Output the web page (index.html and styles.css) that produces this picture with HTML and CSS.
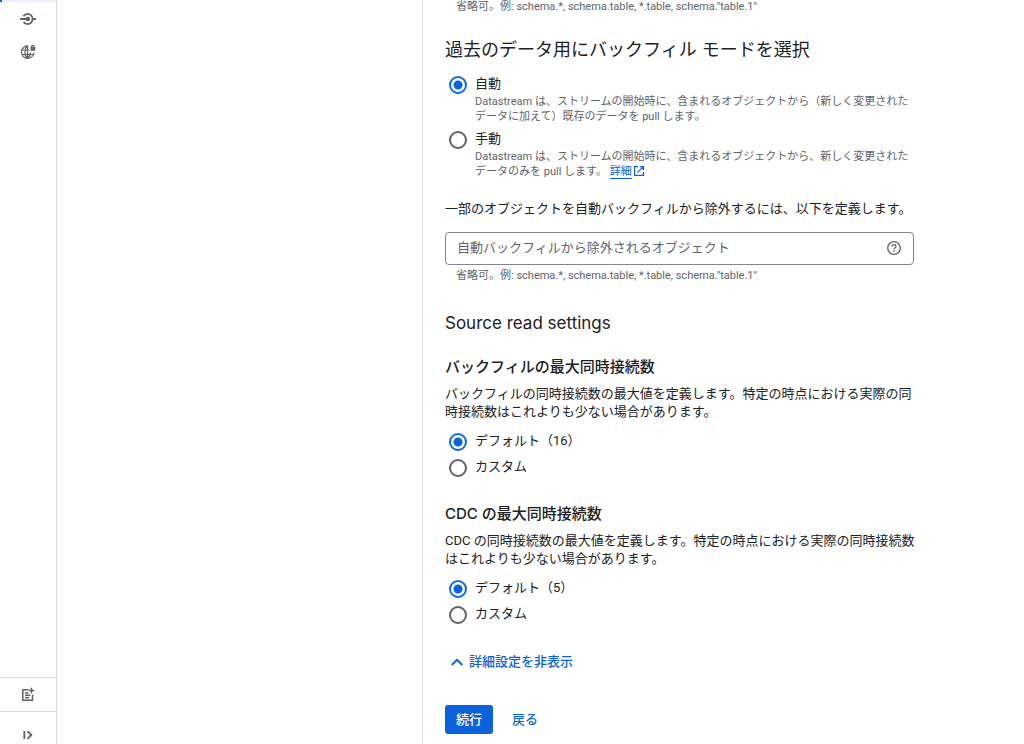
FILE: index.html
```html
<!DOCTYPE html>
<html lang="ja">
<head>
<meta charset="utf-8">
<meta name="viewport" content="width=device-width, initial-scale=1">
<title>Datastream</title>
<link rel="stylesheet" href="styles.css">
</head>
<body>
<div class="app">
  <nav class="rail" aria-label="Datastream">
    <div class="rail-top">
      <a class="rail-link" href="#profiles" aria-label="接続プロファイル">
        <svg width="16" height="14" viewBox="0 0 16 14" fill="none" stroke="currentColor" stroke-width="1.800"><path d="M0 7h8M12.500 7H16M3.500 4.300C4.500 2.500 6 1.900 7.500 1.900a5.100 5.100 0 0 1 0 10.200c-1.500 0-3-.6-4-2.400"/><circle cx="7.800" cy="7" r="2.300" fill="currentColor" stroke="none"/></svg>
      </a>
      <a class="rail-link" href="#private" aria-label="プライベート接続">
        <svg width="16" height="16" viewBox="0 0 16 16" fill="none" stroke="currentColor" stroke-width="1.200"><path d="M8.500 2a6.200 6.200 0 1 0 5.400 6.600M1.700 6h7.600M1.700 10.500h11.500M7.300 2C4 5 4 11 7.300 14.200M7.500 14.200c2.200-1.700 3-3.400 3-5.700M7.500 2v12"/><path d="M10.500 2.800h4.700v4h-4.700z" fill="currentColor" stroke="none"/><path d="M11.700 3V1.500h2.400V3" stroke-width="1"/></svg>
      </a>
    </div>
    <div class="rail-bottom">
      <a class="rail-link rail-notes" href="#notes" aria-label="リリースノート">
        <svg width="14" height="15" viewBox="0 0 14 15" fill="none" stroke="currentColor" stroke-width="1.500"><path d="M7.500 2.700H1.800v10.500h9.700V7.500M4 6h3.500M4 8.300h5.300M4 10.700h4"/><path d="M10.500 0l1 2.400 2.500 1-2.500 1-1 2.600-1-2.600-2.500-1 2.500-1z" fill="currentColor" stroke="none"/></svg>
      </a>
      <button class="rail-link rail-expand" type="button" aria-label="メニューを展開">
        <svg width="10" height="10" viewBox="0 0 10 10" fill="none" stroke="currentColor" stroke-width="1.800"><path d="M1.300 1v8M4.500 1.200L8.300 5l-3.800 3.800"/></svg>
      </button>
    </div>
  </nav>
  <div class="steps"></div>
  <main class="panel">
    <form class="form">
      <p class="hint">省略可。例: schema.*, schema.table, *.table, schema."table.1"</p>

      <h2 class="title title-first" id="mode">過去のデータ用にバックフィル モードを選択</h2>
      <div class="options options-described" role="radiogroup" aria-labelledby="mode">
        <div class="option">
          <input class="radio" type="radio" name="mode" id="auto" checked>
          <div>
            <label class="option-label" for="auto">自動</label>
            <p class="option-note">Datastream は、ストリームの開始時に、含まれるオブジェクトから（新しく変更された<br>データに加えて）既存のデータを pull します。</p>
          </div>
        </div>
        <div class="option">
          <input class="radio" type="radio" name="mode" id="manual">
          <div>
            <label class="option-label" for="manual">手動</label>
            <p class="option-note">Datastream は、ストリームの開始時に、含まれるオブジェクトから、新しく変更された<br>データのみを pull します。 <a class="more" href="#more"><span class="more-text">詳細</span><svg width="10" height="10" viewBox="0 0 10 10" fill="none" stroke="currentColor" stroke-width="1.200"><path d="M4 .6H.6v8.800h8.800V6M6 .6h3.400V4M9.400.6L3.300 6.700"/></svg></a></p>
          </div>
        </div>
      </div>

      <label class="text exclude" for="exclude">一部のオブジェクトを自動バックフィルから除外するには、以下を定義します。</label>
      <div class="field">
        <input class="field-input" id="exclude" type="text" placeholder="自動バックフィルから除外されるオブジェクト">
        <button class="help" type="button" aria-label="ヘルプ">
          <svg width="14" height="14" viewBox="0 0 14 14" fill="none" stroke="currentColor" stroke-width="1.300"><circle cx="7" cy="7" r="6.300"/><path d="M5.100 5.600c0-1.100.8-1.900 1.900-1.900s1.900.8 1.900 1.800c0 1.300-1.900 1.500-1.900 3.100"/><path d="M7 9.500v1.400"/></svg>
        </button>
      </div>
      <p class="hint hint-field">省略可。例: schema.*, schema.table, *.table, schema."table.1"</p>

      <h2 class="title title-read">Source read settings</h2>

      <section class="group">
        <h3 class="subtitle" id="backfill">バックフィルの最大同時接続数</h3>
        <p class="text">バックフィルの同時接続数の最大値を定義します。特定の時点における実際の同<br>時接続数はこれよりも少ない場合があります。</p>
        <div class="options" role="radiogroup" aria-labelledby="backfill">
          <div class="option"><input class="radio" type="radio" name="backfill" id="b-default" checked><label class="option-label" for="b-default">デフォルト（16）</label></div>
          <div class="option"><input class="radio" type="radio" name="backfill" id="b-custom"><label class="option-label" for="b-custom">カスタム</label></div>
        </div>
      </section>

      <section class="group">
        <h3 class="subtitle" id="cdc">CDC の最大同時接続数</h3>
        <p class="text">CDC の同時接続数の最大値を定義します。特定の時点における実際の同時接続数<br>はこれよりも少ない場合があります。</p>
        <div class="options" role="radiogroup" aria-labelledby="cdc">
          <div class="option"><input class="radio" type="radio" name="cdc" id="c-default" checked><label class="option-label" for="c-default">デフォルト（5）</label></div>
          <div class="option"><input class="radio" type="radio" name="cdc" id="c-custom"><label class="option-label" for="c-custom">カスタム</label></div>
        </div>
      </section>

      <button class="toggle" type="button">
        <svg width="12" height="8" viewBox="0 0 12 8" fill="none" stroke="currentColor" stroke-width="2"><path d="M.8 7L6 1.800 11.200 7"/></svg>
        詳細設定を非表示
      </button>
      <div class="actions">
        <button class="button button-primary" type="submit">続行</button>
        <button class="button" type="button">戻る</button>
      </div>
    </form>
  </main>
</div>
</body>
</html>
```
FILE: styles.css
```css
* {
  box-sizing: border-box;
}

body {
  margin: 0;
  background: #fff;
  color: #202124;
  font-family: Roboto, "Noto Sans CJK JP", sans-serif;
  font-size: 13px;
  line-height: 18px;
}

h2, h3, p {
  margin: 0;
}

button, input {
  margin: 0;
  font: inherit;
}

button {
  border: 0;
  padding: 0;
  background: none;
  color: inherit;
  cursor: pointer;
}

.app {
  display: flex;
  height: 100vh;
  overflow: hidden;
}

.rail {
  display: flex;
  flex: none;
  flex-direction: column;
  justify-content: space-between;
  width: 57px;
  border-right: 1px solid #dadce0;
  color: #5f6368;
}

.rail-top {
  padding-top: 2px;
  background: linear-gradient(to right, #0b62dc 2px, #e8f0fe 2px) top / 100% 2px no-repeat;
}

.rail-link {
  display: flex;
  align-items: center;
  justify-content: center;
  width: 100%;
  height: 33px;
  color: inherit;
}

.rail-notes {
  height: 34px;
  border-top: 1px solid #dadce0;
}

.rail-expand {
  height: 33px;
  padding-top: 14px;
  border-top: 1px solid #dadce0;
}

.steps {
  flex: 0 0 38%;
  max-width: 365px;
}

.panel {
  flex: 1;
  min-width: 0;
  padding: 0 22px;
  border-left: 1px solid #dadce0;
  overflow: hidden;
}

.form {
  max-width: 469px;
  white-space: nowrap;
}

.hint {
  padding-left: 11px;
  color: #5f6368;
  font-size: 11px;
  line-height: 14px;
}

.hint-field {
  margin-top: 4px;
}

.title {
  font-family: Inter, "Noto Sans CJK JP", sans-serif;
  font-size: 18px;
  font-weight: 400;
  line-height: 24px;
}

.title-first {
  margin: 24px 0 13px;
}

.title-read {
  margin-top: 28px;
  font-size: 17px;
}

.options {
  display: flex;
  flex-direction: column;
  gap: 8px;
  padding-left: 4px;
}

.options-described {
  gap: 6px;
}

.option {
  display: flex;
  align-items: flex-start;
  gap: 8px;
}

.option-label {
  display: block;
}

.option-note {
  margin-top: 1px;
  color: #5f6368;
  font-size: 11px;
  line-height: 15px;
}

.radio {
  flex: none;
  width: 18px;
  height: 18px;
  margin-top: 1px;
  margin-bottom: -1px;
  border: 2px solid #5f6368;
  border-radius: 50%;
  appearance: none;
}

.radio:checked {
  border-color: #0b6ae4;
  background: radial-gradient(circle, #0b62dc 4px, transparent 5px);
}

.more {
  color: #0b62dc;
  text-decoration: none;
}

.more-text {
  border-bottom: 1px solid;
}

.more svg {
  margin-left: 2px;
  vertical-align: -1px;
}

.exclude {
  display: block;
  margin: 21px 0 14px;
}

.field {
  display: flex;
  align-items: center;
  height: 33px;
  padding: 0 12px 2px 11px;
  border: 1px solid #80868b;
  border-radius: 4px;
}

.field-input {
  flex: 1;
  min-width: 0;
  padding: 0;
  border: 0;
  outline: 0;
  background: none;
}

.field-input::placeholder {
  color: #5f6368;
}

.help {
  display: flex;
  color: #5f6368;
}

.group {
  margin-top: 22px;
}

.group + .group {
  margin-top: 28px;
}

.subtitle {
  margin-bottom: 8px;
  font-family: Inter, "Noto Sans CJK JP", sans-serif;
  font-size: 15px;
  font-weight: 500;
  line-height: 20px;
}

.group .options {
  margin-top: 11px;
}

.toggle {
  display: flex;
  align-items: center;
  gap: 6px;
  margin: 30px 0 34px;
  padding-left: 6px;
  color: #0b62dc;
  font-weight: 500;
}

.actions {
  display: flex;
  gap: 8px;
}

.button {
  height: 29px;
  padding: 0 11px;
  border-radius: 3px;
  color: #0b62dc;
  font-weight: 500;
}

.button-primary {
  background: #0b62dc;
  color: #fff;
}
```
